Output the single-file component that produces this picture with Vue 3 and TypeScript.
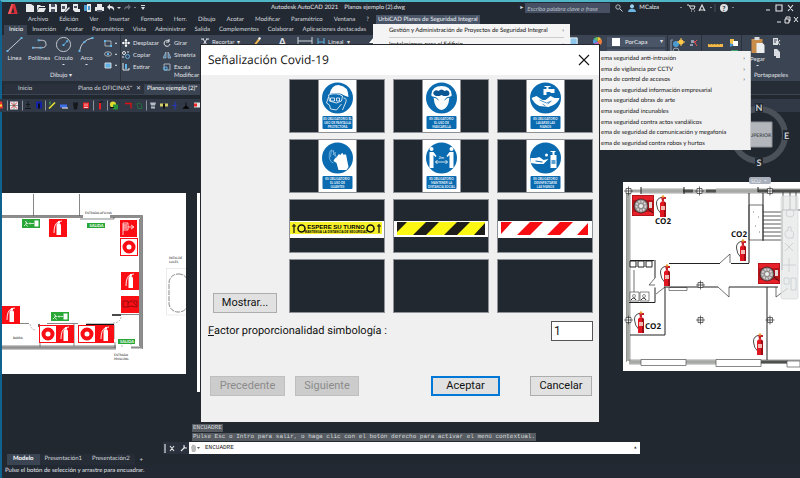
<script setup lang="ts">
import { ref } from 'vue'

interface Sign {
  id: string
  lines: string[]
}

const menus: string[] = ['Archivo', 'Edición', 'Ver', 'Insertar', 'Formato', 'Herr.', 'Dibujo', 'Acotar', 'Modificar', 'Paramétrico', 'Ventana', '?']
const ribbonTabs: string[] = ['Inicio', 'Inserción', 'Anotar', 'Paramétrico', 'Vista', 'Administrar', 'Salida', 'Complementos', 'Colaborar', 'Aplicaciones destacadas']
const submenu: { text: string; more: boolean }[] = [
  { text: 'ema seguridad anti-intrusión', more: true },
  { text: 'ema de vigilancia por CCTV', more: true },
  { text: 'ema de control de accesos', more: true },
  { text: 'ema de seguridad información empresarial', more: false },
  { text: 'ema seguridad obras de arte', more: false },
  { text: 'ema seguridad incunables', more: false },
  { text: 'ema seguridad contra actos vandálicos', more: false },
  { text: 'ema de seguridad de comunicación y megafonía', more: false },
  { text: 'ema de seguridad contra robos y hurtos', more: false },
]
const signs: Sign[] = [
  { id: 'visor', lines: ['ES OBLIGATORIO EL', 'USO DE PANTALLA', 'PROTECTORA'] },
  { id: 'mask', lines: ['ES OBLIGATORIO', 'EL USO DE', 'MASCARILLA'] },
  { id: 'wash', lines: ['ES OBLIGATORIO', 'LAVARSE LAS', 'MANOS'] },
  { id: 'glove', lines: ['ES OBLIGATORIO', 'EL USO DE', 'GUANTES'] },
  { id: 'distance', lines: ['ES OBLIGATORIO', 'MANTENER LA', 'DISTANCIA SOCIAL'] },
  { id: 'gel', lines: ['ES OBLIGATORIO', 'DESINFECTARSE', 'LAS MANOS'] },
]
const layouts: string[] = ['Modelo', 'Presentación1', 'Presentación2']
const factor = ref('1')
const query = ref('')
const color = ref('PorCapa')
const open = ref(true)

const extinguishers: [number, number][] = [[49, 220], [121, 273], [2, 307], [56, 326], [96, 326]]
const reels: [number, number][] = [[120, 239], [39, 326], [78, 326]]
const redExtinguishers: [number, number][] = [[656, 195], [736, 239], [660, 264], [634, 311], [753, 333]]
const cabinets: [number, number][] = [[632, 195], [758, 263]]
const crosses: [number, number][] = [[628.5, 191], [699.5, 191], [770, 191], [700.5, 285], [700.5, 320], [628.5, 320], [770, 320]]
</script>

<template>
  <div class="app">
    <header class="titlebar">
      <svg class="logo" viewBox="0 0 14 20"><path d="M0 17 5.500 2h3.500l4 15H9.500L8.700 13.500 4.500 13.800 3.500 17z" fill="#d62f36" /><path d="m5.300 11 1.800-5.500 1.200 5.200z" fill="#222933" /><path d="M0 17 5.500 2 7 2 3.500 17z" fill="#f05a5c" /></svg>
      <svg class="quick" viewBox="0 0 122 10">
        <g fill="#e8eaec">
          <path d="M1 1h5l3 2v6H1zM12 2h3l1 1h4v1h-6l-2 4zM14 5h7l-2 4h-7zM24 1h7l1 1v7h-8z" />
          <path d="M36 1h6v4l-3 4h-3zM44 4l1 1-4 4h-1V8zM48 1h5v5h2v3h-5l-2-2zM62 1h4v8h-4zM72 1h5v3h-5zM70 4h9v4H70z" />
          <path d="m82 4 3-3v2q5 0 4 5-1-3-4-3v2z" />
        </g>
        <path d="M26 1h4v3h-4zM26 6h4v3h-4zM37 3h3v3h-3zM49 3h3v2h-3zM72 7h5v2h-5z" fill="#4b5563" />
        <path d="M59 2h3v6h-3zM63 3h2v4h-2z" fill="#4a9bd2" />
        <path d="m106 4-3-3v2q-4 0-4 4 1-2 4-2v2z" fill="#616975" />
        <path d="m92 4 2 2 2-2zM109 4l1 1 1-1zM116 2h4v1h-4zM116 4h4l-2 3z" fill="#d8dbdf" />
      </svg>
      <h1 class="title"><span>Autodesk AutoCAD 2021</span><span>Planos ejemplo (2).dwg</span></h1>
      <div class="account">
        <i class="caret">▸</i>
        <input v-model="query" class="search" type="search" aria-label="Buscar" placeholder="Escriba palabra clave o frase" />
        <svg class="ic" viewBox="0 0 8 8"><circle cx="3" cy="3" r="2.200" fill="none" stroke="#d4d7db" stroke-width=".8" /><path d="m5 5 2.500 2.500" stroke="#d4d7db" /></svg>
        <svg class="ic" viewBox="0 0 8 8"><circle cx="4" cy="2.200" r="2" fill="#9bd1ef" /><path d="M0 8q0-3 4-3.500Q8 5 8 8z" fill="#6db5e2" /></svg>
        <span class="user">MCalza</span>
        <svg class="tray" viewBox="0 0 56 10"><path d="m1 4 1 1 1-1zM31 4l1 1 1-1zM53 4l1 1 1-1z" fill="#ddd" /><path d="M8 2h2l2 4h3l1-3h-5M12 8h1M15 8h1" fill="none" stroke="#ddd" /><path d="m20 8 3-6 3 6M21 7h4" fill="none" stroke="#ddd" stroke-width="1.200" /><path d="M36 1v8" stroke="#444c58" /><circle cx="45" cy="5" r="4" fill="#dfe1e4" /><text x="43.300" y="7.500" font-size="7" font-weight="bold" fill="#222933">?</text></svg>
        <svg class="winctl" viewBox="0 0 32 10"><path d="M1 7h4M11 2h6v6h-6zM23 2l5 6M28 2l-5 6" fill="none" stroke="#e8eaec" stroke-width="1.100" /></svg>
      </div>
    </header>

    <nav class="menubar">
      <a v-for="m in menus" :key="m" href="#">{{ m }}</a>
      <a href="#" class="current">UrbiCAD Planes de Seguridad Integral</a>
      <svg class="docctl" viewBox="0 0 24 10"><path d="M1 7h4M9 4h4v4H9zM10 4V2h4v4h-1M18 2l4 5M22 2l-4 5" fill="none" stroke="#e8eaec" /></svg>
      <div class="dropdown">
        <a href="#"><span>Gestión y Administración de Proyectos de Seguridad Integral</span><span>›</span></a>
        <a href="#"><span>Instalaciones para el Edificio</span><span>›</span></a>
      </div>
    </nav>

    <nav class="ribbontabs">
      <a v-for="(t, i) in ribbonTabs" :key="t" href="#" :class="{ active: i === 0 }">{{ t }}</a>
    </nav>

    <section class="ribbon">
      <div class="panel draw">
        <div class="tools">
          <button class="big"><svg viewBox="0 0 16 17"><path d="M1 15 15 2" stroke="#c9ced5" /><path d="M0 14h2v2H0zM14 1h2v2h-2z" fill="#5fb2e6" /></svg>Línea</button>
          <button class="big"><svg viewBox="0 0 18 17"><path d="M2 12h9q5 0 5-4t-4-4H8" fill="none" stroke="#c9ced5" /><path d="M1 11h2v2H1zM9 11h2v2H9zM7 3h2v2H7z" fill="#5fb2e6" /></svg>Polilínea</button>
          <button class="big"><svg viewBox="0 0 18 17"><circle cx="9" cy="8.500" r="7.500" fill="none" stroke="#c9ced5" /><path d="m9 9 4-4" stroke="#5fb2e6" /><path d="M8 8h2v2H8zM12 4h2v2h-2z" fill="#5fb2e6" /></svg>Círculo<b class="drop"></b></button>
          <button class="big"><svg viewBox="0 0 16 17"><path d="M1 15Q3 4 14 2" fill="none" stroke="#c9ced5" /><path d="M0 14h2v2H0zM5 5h2v2H5zM13 1h2v2h-2z" fill="#5fb2e6" /></svg>Arco<b class="drop"></b></button>
          <svg class="shapes" viewBox="0 0 14 34"><path d="M1 5h6v5H1z" fill="none" stroke="#aab1bb" /><ellipse cx="4" cy="18" rx="3.500" ry="2.200" fill="none" stroke="#aab1bb" /><path d="M1 27h6v5H1z" fill="#5fb2e6" stroke="#cfd4da" /><path d="m11 7 1 1 1-1zM11 18l1 1 1-1zM11 29l1 1 1-1z" fill="#ddd" stroke="#ddd" stroke-width=".5" /><path d="M0 4h2v2H0zM6 9h2v2H6zM3 17h2v2H3z" fill="#5fb2e6" /></svg>
        </div>
        <span class="caption">Dibujo <i>▾</i></span>
      </div>

      <div class="panel modify">
        <div class="toolgrid">
          <button><svg viewBox="0 0 8 8"><path d="M4 0v8M0 4h8" stroke="#fff" stroke-width="1.200" /><path d="m4 0 1.500 2h-3zM4 8l1.500-2h-3zM0 4l2-1.500v3zM8 4 6 2.500v3z" fill="#fff" /></svg>Desplazar</button>
          <button><svg viewBox="0 0 8 8"><path d="M6 2a3 3 0 1 0 1 3M6 0v3H3" fill="none" stroke="#e6e8eb" /></svg>Girar</button>
          <button><svg viewBox="0 0 8 8"><circle cx="2" cy="2" r="1.500" fill="none" stroke="#e6e8eb" /><circle cx="5.500" cy="5.500" r="2" fill="none" stroke="#5fb2e6" /><path d="M5 1h2M1 5v2" stroke="#e6e8eb" /></svg>Copiar</button>
          <button><svg viewBox="0 0 8 8"><path d="M0 7 3 1v6zM8 7 5 1v6z" fill="#3d7fae" stroke="#c9ced5" stroke-width=".6" /></svg>Simetría</button>
          <button><svg viewBox="0 0 8 8"><path d="M1 0v7h6V5" fill="none" stroke="#e6e8eb" /><path d="M3 1h2v5H3z" fill="#5fb2e6" /></svg>Estirar</button>
          <button><svg viewBox="0 0 8 8"><path d="M1 1h6v6H1z" fill="none" stroke="#aab1bb" /><path d="M1 4h3v3H1z" fill="none" stroke="#5fb2e6" /></svg>Escala</button>
        </div>
        <span class="caption">Modificar <i>▾</i></span>
      </div>

      <div class="panel annotate">
        <button class="tool"><svg viewBox="0 0 8 8"><path d="M0 1h3M2 1l4 6M6 1 2 7M5 1h3" stroke="#e6e8eb" /></svg>Recortar <i>▾</i></button>
        <svg class="brush" viewBox="0 0 10 10"><path d="m2 9 5-7 2 1-5 6z" fill="#f2b84b" /><path d="m7 2 1-2 2 1-1 2z" fill="#fff" /></svg>
        <b class="glyph">A</b>
        <svg class="dim" viewBox="0 0 16 8"><path d="M1 0v8M15 0v8M1 4h14" stroke="#cfd4da" fill="none" /></svg>
        <button class="tool lineal"><svg viewBox="0 0 8 8"><path d="M1 0v8M7 0v8M1 4h6" stroke="#5fb2e6" /></svg>Lineal <i>▾</i></button>
        <svg class="layers" viewBox="0 0 14 10"><path d="M5 0h9L9 6H0z" fill="#fff" /><path d="M2 7h7l3-4 2 0-4 6H0z" fill="#c3c8ce" /></svg>
      </div>

      <div class="panel props">
        <svg class="preview" viewBox="0 0 10 10"><path d="M0 1h8v9H0z" fill="#8fc6ea" stroke="#fff" /></svg>
        <svg class="wheel" viewBox="0 0 10 10"><path d="M5 5V0A5 5 0 0 1 9.300 2.500z" fill="#f4c534" /><path d="M5 5 9.300 2.500A5 5 0 0 1 7.500 9.300z" fill="#ef7c3b" /><path d="M5 5 7.500 9.300A5 5 0 0 1 .7 7.500z" fill="#c35fc9" /><path d="M5 5 .7 7.500A5 5 0 0 1 1 2z" fill="#4d9de0" /><path d="M5 5 1 2A5 5 0 0 1 5 0z" fill="#5dc46a" /></svg>
        <div class="combos">
          <label class="combo"><span class="swatch"></span><select v-model="color" aria-label="Color"><option>PorCapa</option></select><i>▾</i></label>
          <div class="combo"></div>
        </div>
      </div>

      <div class="panel groups">
        <svg viewBox="0 0 32 20"><path d="M4 2H2v16h2M14 18h2" fill="none" stroke="#8fa0b4" /><circle cx="7" cy="6" r="3" fill="#4a9bd2" /><circle cx="7" cy="13" r="3" fill="none" stroke="#9aa3af" /><circle cx="12" cy="4" r="2.500" fill="#ffc94a" /><path d="M12 0v8M8 4h8" stroke="#ffc94a" /><path d="M22 2h3v3h-3zM21 6h3v2h-3z" fill="#8fa0b4" /><path d="m25 5 3-3M25 3l3 5" stroke="#e84b4b" /></svg>
      </div>
      <div class="panel utils">
        <svg viewBox="0 0 32 20"><path d="M2 6h15v3H2z" fill="#f0b84a" /><path d="M4 6v1M7 6v1M10 6v1M13 6v1" stroke="#8b6410" /><path d="M24 1h4v5h-4z" fill="#f2c24e" /><path d="M27 3h5v5h-5z" fill="#fff" /><path d="m24 5 4 2-4 2z" fill="#4a9bd2" /><path d="M25 12h7v7h-7z" fill="#3da36a" /></svg>
      </div>
      <div class="panel clip">
        <div class="cliprow">
          <button class="big"><svg viewBox="0 0 16 17"><path d="M2 2h11v14H2z" fill="#c98d4b" /><path d="M5 0h5v3H5z" fill="#d9dce0" /><path d="M7 6h6l2 2v8H7z" fill="#eceef0" /></svg>Pegar<b class="drop"></b></button>
          <svg class="clipicons" viewBox="0 0 8 22"><path d="M0 1h5v7H0zM1 12h3l3 3v6H3v-2H1z" fill="#d9dce0" /><path d="m3 3 4 5M7 3 3 8" stroke="#e6e8eb" /><path d="M1 3h3M1 5h2" stroke="#3b4453" /></svg>
        </div>
        <span class="caption">Portapapeles</span>
      </div>
    </section>

    <nav class="filetabs">
      <a href="#">Inicio</a>
      <a href="#">Plano de OFICINAS* <i>✕</i></a>
      <a href="#" class="active">Planos ejemplo (2)*</a>
    </nav>

    <div class="toolstrip">
      <svg viewBox="0 0 202 12">
        <path d="M0 2h2l1 7H0z" fill="#e33" /><path d="M0 5h2v2H0z" fill="#fd3" />
        <path d="M7.500 1v10M22.500 1v10M45.500 1v10M93.500 1v10M107.500 1v10M146.500 1v10" stroke="#8b929c" />
        <path d="M10 2h8v8h-8z" fill="#eee" /><path d="m11 3 6 6M17 3l-6 6" stroke="#d33" /><path d="M14 2v8M10 6h8" stroke="#555" stroke-width=".6" />
        <path d="M28 2v6M26 5h4M25 9h6" stroke="#15181d" /><path d="M36 2h6v7h-6z" fill="#1424a5" /><path d="M38 4h2v5h-2z" fill="#0a0e20" />
        <path d="m49 9 6-6" stroke="#e6e234" stroke-width="1.600" /><path d="M50 2v3" stroke="#38c14a" /><path d="M60 5h7v3h-7z" fill="#3d6fe8" /><path d="M62 8h6v1h-6z" fill="#fff" />
        <path d="M73 3h5l-1 7h-3z" fill="#14171c" /><path d="M83 3h6v6h-6z" fill="#eb1d22" /><path d="M85 4v3M87 4v3M84 8h4" stroke="#fff" stroke-width=".7" />
        <path d="M100 3v7" stroke="#eb1d22" stroke-width="2" /><path d="m99 3 4-1" stroke="#111" /><circle cx="113" cy="5" r="3" fill="#e4dc2c" /><path d="M113 5h5v5h-5z" fill="#27923b" /><path d="M110 8h4" stroke="#111" />
        <path d="M125 4h6v5" fill="none" stroke="#d11" stroke-width="1.300" /><path d="M137 4q5-2 5 5h-4z" fill="none" stroke="#236c3c" />
        <path d="M150 3h6l-1 3h-4zM151 7h4v2h-4z" fill="#b8bec6" /><path d="M160 4h8v3h-8z" fill="#d4cf6b" /><path d="M163 4h2v5h-2z" fill="#111" />
        <path d="M175 2v8M172 6h5" stroke="#2839b5" stroke-width="1.200" /><path d="M186 3v4M183 9l3-3 3 3z" stroke="#111" /><path d="M194 3h7v5h-7z" fill="#e0e0e0" /><path d="M194 4h3v3h-3z" fill="#e22" />
      </svg>
    </div>

    <main class="canvas">
      <svg class="plan left" viewBox="2 193 184 181">
        <path d="M2 193h184v181H2z" fill="#fff" />
        <path d="M2 217h82" stroke="none" />
        <path d="M2 229.500h82M112 229.500h31v119M2 347.500h114M131 347.500h11" fill="none" stroke="#8d8d8d" stroke-width="2" transform="translate(0 -13) scale(1)" visibility="hidden" />
        <path d="M2 217h81M110 217h31v131M2 347.500h114M131 347.500h11" fill="none" stroke="#8d8d8d" stroke-width="2" />
        <path d="M2 215.500h81M110 215.500h32.500V349M2 346h114M2 349h114M139.500 219v127M33.500 194v22M79.500 194v22M80 219h34v-2M139 314.500h-18M115 342v6M40 325v22M74 324v22M2 323.500h27M47 323.500h31M114 325v14" fill="none" stroke="#555" stroke-width=".7" />
        <path d="M112 315h9M86 324.500h28M39 324v3" stroke="#111" stroke-width="1.300" />
        <path d="M30 324q1 6 6 6M121 317q-1 6-8 6M122 342v6M131 340v6" fill="none" stroke="#777" stroke-width=".5" stroke-dasharray="2 1" />
        <rect x="169" y="274" width="19" height="38" rx="9" fill="none" stroke="#555" stroke-width=".7" stroke-dasharray="5 1" />
        <path d="M166 268.500h20M166.500 268v47h20" fill="none" stroke="#d8d8d8" stroke-width=".5" />
        <g class="label"><text x="85" y="214">ENTRADA OFICINA</text><text x="169" y="259">PATIO DE</text><text x="169" y="263">LUCES</text><text x="13" y="339">BARRA</text><text x="114" y="356">ENTRADA</text><text x="114" y="360">PRINCIPAL</text></g>
        <g v-for="[x, y] in [[22, 219], [51, 312]]" :key="'r' + x" :transform="`translate(${x} ${y})`">
          <rect width="18" height="9" fill="#28a636" /><path d="M12.500 1.500h4v6h-4z" fill="#fff" /><path d="M7 4.500h5M8 3.500 7 4.500 8 5.500" fill="none" stroke="#fff" stroke-width=".7" /><path d="m3.500 2 1 2-1 1.500L2 7M4 4l2 .5M4 5.500l1.500 2" fill="none" stroke="#fff" stroke-width=".8" />
        </g>
        <g class="exit"><path d="M87 223h18v5H87zM118 339h17v5h-17z" fill="#28a636" /><text x="89.500" y="227">SALIDA</text><text x="120" y="343">SALIDA</text></g>
        <g v-for="([x, y], i) in extinguishers" :key="'e' + i" :transform="`translate(${x} ${y - 1})`">
          <rect width="18" height="18" fill="#fb0d14" /><path d="M7.500 6q0-2 2-2t2.500 2v10H7.500zM9 2h2v2H9z" fill="#fff" /><path d="M9 3Q5 5 5 14M10 2.500l3-.5" fill="none" stroke="#fff" stroke-width=".9" />
        </g>
        <g v-for="([x, y], i) in reels" :key="'b' + i" :transform="`translate(${x} ${y - 1})`">
          <rect x=".5" y=".5" width="17" height="17" fill="#fff" stroke="#fb0d14" /><circle cx="9" cy="9" r="4.500" fill="none" stroke="#fb0d14" stroke-width="4" />
        </g>
        <path d="M120 220h17v17h-17zM121 296h18v17h-18z" fill="#fb0d14" /><path d="M123 223h5v7h-5zM123 230v5M128 227h5M131 225l3 2-3 2" fill="none" stroke="#fff" stroke-width=".8" /><path d="M124 224v5M126 224v5" stroke="#fff" /><path d="M123 301h5v6h-5zM128 303l3-2h6v6l-6-1-3 1M133 302l3 3" fill="none" stroke="#6d0b10" stroke-width=".7" />
      </svg>
      <div class="sheet"></div>

      <svg class="plan right" viewBox="623 182 177 189">
        <path d="M623 182h177v189H623z" fill="#fff" />
        <path d="M628 193v168M629 191h171M629 362h171" fill="none" stroke="#a6aaa4" stroke-width="3" />
        <path d="M626.500 189v173M630 193v168M641 189h43M716 189h84M641 193h159M629 360h171M629 364h35M684 364h76" fill="none" stroke="#666" stroke-width=".6" />
        <path d="M683 191h10M706 191h10M758 191h42M761 362h27" stroke="#4e524e" stroke-width="3" />
        <path d="M641 359.500h45v6h-45zM716 359.500h45v7h-45zM787 361h13v6h-13zM669 287.500h18v3h-18z" fill="#fff" stroke="#555" stroke-width=".7" />
        <path d="M749 193v70M763 193v48M782 210v60M630 260.500h24M669 263.500h51M731 263.500h18M664 287h54M729 287h49M665 287v48M630 335h35M629 302.500h26v-15M655 260v18M767 287v73M641 187v7M684 187v7M758 187v5" fill="none" stroke="#222" stroke-width="1" />
        <path d="m720 263 10-9v9M718 287l11 10v-10M776 287v10l12-9M655 278l-6 7h6M656 294l9-7M634 270v30" fill="none" stroke="#333" stroke-width=".7" />
        <path d="M749 205h14v35h-14z" fill="none" stroke="#333" stroke-width=".7" /><path d="M753 212h1M758 217h1M755 226h1M759 232h1" stroke="#777" />
        <path d="M763 212h19M763 216h19M763 220h19M763 224h19M763 228h19M763 232h19M763 236h19M763 240h19M783 192v18M790 192v18M796 192v18M782 210h18" stroke="#333" stroke-width=".8" />
        <path d="M630 261h6v6h-6zM638 261h6v6h-6zM646 261h6v6h-6z" fill="#fff" stroke="#222" /><path d="M630 292h9v9h-9zM640 292h9v9h-9z" fill="#fff" stroke="#333" stroke-width=".6" /><path d="M631 300q3-4 5 0M641 300q3-4 5 0" fill="none" stroke="#222" /><circle cx="634" cy="296" r="1.500" fill="none" stroke="#222" stroke-width=".5" /><circle cx="644" cy="296" r="1.500" fill="none" stroke="#222" stroke-width=".5" />
        <g v-for="([x, y], i) in crosses" :key="'c' + i" :transform="`translate(${x} ${y})`"><path d="M-2.500-2.500h5v5h-5z" fill="#eee" /><path d="M-4.500 0h9M0-4.500v9M-2.500-2.500h5v5h-5z" fill="none" stroke="#333" stroke-width=".7" /></g>
        <g v-for="([x, y], i) in cabinets" :key="'g' + i" :transform="`translate(${x} ${y})`">
          <path d="M0 0h22v21H0z" fill="#b5141b" /><path d="M1 1h20v4H1zM1 17h20v3H1z" fill="#e6212a" /><circle cx="9" cy="11" r="7" fill="#8f8b8c" stroke="#330f12" stroke-width=".7" /><circle cx="9" cy="11" r="4.500" fill="none" stroke="#d4d0ce" stroke-width="2" stroke-dasharray="2 1" /><circle cx="9" cy="11" r="2" fill="#eee" /><path d="M17 7h3v6h-3z" fill="#e7d9d8" /><path d="M16 14l5 4" stroke="#440a0d" />
        </g>
        <g v-for="([x, y], i) in redExtinguishers" :key="'x' + i" :transform="`translate(${x} ${y})`">
          <path d="M7 2Q0 3 .5 9t4 9" fill="none" stroke="#1c1c1c" stroke-width=".8" /><path d="M4 8q3-4 6 0v14H4z" fill="#e01620" /><path d="M8 7q1 0 2 1v14H8z" fill="#9d0c14" /><path d="M5 11h4v4H5z" fill="#f2b9b4" /><path d="M5 2h5v2H8v2H6z" fill="#c6212a" /><circle cx="7" cy="1.500" r="1.200" fill="#e7a32d" />
        </g>
        <g class="co2"><text x="655" y="223.500">CO2</text><text x="731" y="236.500">CO2</text><text x="645" y="328.500">CO2</text></g>
        <rect x="781" y="196" width="17" height="103" rx="2" fill="#e6e8e8" fill-opacity=".75" stroke="#cfd1d3" stroke-width=".6" />
        <g fill="none" stroke="#c9cccf" stroke-width=".8"><circle cx="790" cy="213" r="4" /><path d="M785 235q0-6 3-4v-4h3v4q4 0 2 7h-6zM785 251l8-8M785 243l8 8M789 258v14M783 265h13M784 278h5v6h-5zM791 278h5v12h-5z" /></g>
      </svg>

      <svg class="viewcube" viewBox="730 100 66 86">
        <circle cx="759" cy="135" r="26" fill="none" stroke="#4b5158" stroke-width="6" />
        <path d="M746 122h26v25h-26z" fill="#b3b7bb" stroke="#8c9197" /><path d="M755 103h8v9h-8zM783 130h7v10h-7zM755 158h8v9h-8z" fill="#212830" /><g class="compass"><text x="759" y="111">N</text><text x="786.500" y="138.500">E</text><text x="759" y="166">S</text></g><text class="face" x="759" y="137">SUPERIOR</text>
        <rect x="749" y="177" width="22" height="7" rx="2" fill="#a9b0bb" /><text class="scu" x="751" y="182.500">SCU</text><path d="m764 180 1.500 1.500L767 180z" fill="#dfe3e8" />
      </svg>

      <div class="submenu">
        <a v-for="item in submenu" :key="item.text" href="#"><span>{{ item.text }}</span><span v-if="item.more">›</span></a>
      </div>

      <section class="command">
        <p><span>ENCUADRE</span></p>
        <p><span>Pulse Esc o Intro para salir, o haga clic con el botón derecho para activar el menú contextual.</span></p>
        <div class="prompt">
          <svg viewBox="0 0 26 12"><path d="M1 2h2v9H1z" fill="#9299a2" /><path d="m7 4 4 5M11 4 7 9M18 9l4-4M21 3v3h3" stroke="#e8eaec" fill="none" stroke-width="1.100" /></svg>
          <div class="line"><svg viewBox="0 0 12 10"><path d="M2 4q0-2 1 0V2q1-1 1 0 1-1 1 0 1-1 1 1 1-1 1 1v3L6 9H3z" fill="#bbb" /><path d="m8 4 1.500 2L11 4z" fill="#555" /></svg><span>ENCUADRE</span><i>▴</i></div>
        </div>
      </section>
    </main>

    <nav class="layouts">
      <a v-for="(l, i) in layouts" :key="l" href="#" :class="{ active: i === 0 }">{{ l }}</a>
      <button aria-label="Nueva presentación">+</button>
    </nav>
    <footer class="status">Pulse el botón de selección y arrastre para encuadrar.</footer>

    <div v-if="open" class="overlay">
      <section class="dialog" role="dialog" aria-labelledby="dialog-title">
        <header>
          <h2 id="dialog-title">Señalización Covid-19</h2>
          <button class="close" aria-label="Cerrar" @click="open = false"><svg viewBox="0 0 12 12"><path d="m1 1 10 10M11 1 1 11" stroke="#111" stroke-width="1.100" /></svg></button>
        </header>
        <div class="gallery">
          <button class="btn show">Mostrar...</button>
          <div class="cells">
            <button v-for="s in signs" :key="s.id" class="cell" :aria-label="s.lines.join(' ')">
              <svg class="sign" viewBox="0 0 38 52">
                <path d="M0 0h38v52H0z" fill="#fff" /><circle cx="19" cy="18" r="15.500" fill="#0b6bb0" /><rect x="4" y="36" width="30" height="13" rx="1" fill="#0b6bb0" />
                <g v-if="s.id === 'visor'"><path d="M11 14Q13 5 20 5q10 1 10 12l-3-1q-7-5-16-2z" fill="#fff" /><path d="M10 15q8-3 14 1l-1 5-5 2-7-2zM10 17l-2 6 3 2 1 4 6 1 5-6M25 18q4 0 2 5l-3 7M12 18h4v3h-4zM18 18h3v3h-3z" fill="none" stroke="#fff" stroke-width=".8" /></g>
                <g v-else-if="s.id === 'mask'"><path d="M9 14Q10 6 19 6t10 8q1 2-2 3l-1 6q-2 6-7 7-5-1-7-7l-1-6q-3-1-2-3z" fill="#fff" /><path d="M11 12q2-3 5-1 3-3 6 0 4-2 5 2 0 3-3 3h-3l-2-1-2 1h-3q-4-1-3-4z" fill="#0b5796" /><path d="M10 17q4 0 6 3M28 17q-4 0-6 3" fill="none" stroke="#0b6bb0" /></g>
                <g v-else-if="s.id === 'wash'"><path d="M17 9h3V7h-2V6h6v1h-2v2h6v4h-4v-1h-4v3h-3z" fill="#fff" /><path d="M5 18l5-2 6 4h3l5-4 4 2h5q-1 4-6 7l-5 2-9-1q-6-3-8-8z" fill="#fff" /><path d="M13 20l7 3 5-2M16 24l3 2M24 22l-3 2" fill="none" stroke="#0b6bb0" stroke-width=".7" /></g>
                <g v-else-if="s.id === 'glove'"><path d="M19 16q1-3 3-1 2-4 3 0 3-2 3 2l2 10-2 3h-8l-2-7-3-2 1-2z" fill="#fff" /><path d="M18 18q-2-7-5-8-3 1-2 9 2 4 4 4M13 10l-1 7M15 10v5M17 12l-1 4" fill="none" stroke="#8fc4e8" stroke-width=".7" /></g>
                <g v-else-if="s.id === 'distance'"><circle cx="9" cy="9" r="2" fill="#fff" /><circle cx="29" cy="9" r="2" fill="#fff" /><path d="M7 12h4l3 4-1 1-2-2v13H7zM27 12h4v16h-4V15l-2 2-1-1z" fill="#fff" /><path d="M13 22h12M15 20l-2 2 2 2M23 20l2 2-2 2" fill="none" stroke="#fff" stroke-width=".8" /><text x="16" y="19">2m</text></g>
                <g v-else><path d="M4 18h5l4-1 4 3 5-1-5 5h-6l-7-1z" fill="#fff" /><path d="M24 15h6v13h-6zM26 12h2v3h-2zM24 11h5v1h-5z" fill="#fff" /><path d="M25 20h4v4h-4z" fill="#5da1d2" /><circle cx="20" cy="15" r="1.500" fill="#fff" /><path d="M9 21l7 1" stroke="#0b6bb0" /></g>
                <text v-for="(l, i) in s.lines" :key="l" class="signtext" x="19" :y="40 + i * 4">{{ l }}</text>
              </svg>
            </button>
            <button class="cell tape" aria-label="Espere su turno"><svg viewBox="0 0 94 17"><path d="M0 0h94v17H0z" fill="#fff" /><path d="M0 1h92v12H0z" fill="#f6f02b" /><path d="M4 3v9M2 5h4M89 3v9M87 5h4" stroke="#111" stroke-width="1.200" /><circle cx="11.500" cy="7.500" r="3.500" fill="none" stroke="#111" stroke-width="1.500" /><circle cx="80.500" cy="7.500" r="3.500" fill="none" stroke="#111" stroke-width="1.500" /><text class="turn" x="46" y="8">ESPERE SU TURNO</text><text class="turnsmall" x="46" y="12">MANTENGA LA DISTANCIA DE SEGURIDAD</text></svg></button>
            <button class="cell tape" aria-label="Cinta amarilla y negra"><svg viewBox="0 0 94 17"><path d="M0 0h94v16H0z" fill="#fff" /><path d="M3 1h88v13H3z" fill="#fbf712" /><path d="M3 1h10L3 11zM32 1h13L32 14H19zM63 1h13L63 14H50zM91 2v12H80z" fill="#1d1d1b" /></svg></button>
            <button class="cell tape" aria-label="Cinta roja y blanca"><svg viewBox="0 0 94 17"><path d="M0 0h94v17H0z" fill="#fff" /><path d="M3 1h11L3 13zM32 1h13L32 14H19zM62 1h13L62 14H49zM90 2v12H79z" fill="#f80d12" /></svg></button>
            <button v-for="n in 3" :key="n" class="cell" aria-label="Vacío"></button>
          </div>
        </div>
        <div class="factor">
          <label for="factor"><u>F</u>actor proporcionalidad simbología :</label>
          <input id="factor" v-model="factor" type="text" />
        </div>
        <footer class="actions">
          <button class="btn prev" disabled>Precedente</button>
          <button class="btn next" disabled>Siguiente</button>
          <button class="btn ok" @click="open = false">Aceptar</button>
          <button class="btn cancel" @click="open = false">Cancelar</button>
        </footer>
      </section>
    </div>
  </div>
</template>

<style>
body { background: #212830; overflow: hidden; }
</style>

<style scoped>
* { box-sizing: border-box; }
.app { position: relative; display: flex; flex-direction: column; min-height: 100vh; background: #212830; border-top: 2px solid #4fb6c8; border-left: 2px solid #10628f; font: 6px/8px Lato, "Open Sans", sans-serif; text-rendering: geometricPrecision; color: #d3d7dc; }
a { color: inherit; text-decoration: none; white-space: nowrap; }
button { font: inherit; color: inherit; background: none; border: 0; padding: 0; white-space: nowrap; }
i { font-style: normal; }
svg { display: block; flex: none; }
h1, h2, p { margin: 0; font: inherit; }

.titlebar { display: flex; height: 12px; align-items: center; background: #222933; }
.logo { width: 14px; height: 20px; margin-left: 4px; align-self: flex-start; }
.quick { width: 122px; height: 10px; margin-left: 5px; }
.title { display: flex; gap: 6px; margin-left: 124px; color: #e3e5e8; white-space: nowrap; }
.account { display: flex; align-items: center; gap: 5px; margin-left: auto; padding-right: 3px; }
.caret { color: #ddd; }
.search { width: 85px; height: 10px; padding: 0 2px; border: 0; background: #465062; color: #dde; font: inherit; font-style: italic; margin-left: -3px; }
.search::placeholder { color: #b6bdc8; }
.ic { width: 8px; height: 8px; }
.user { margin-left: -2px; color: #eee; }
.tray { width: 56px; height: 10px; margin-left: 15px; }
.winctl { width: 32px; height: 10px; margin-left: 25px; }

.menubar { position: relative; z-index: 5; display: flex; align-items: center; height: 11px; gap: 11px; padding-left: 26px; background: #222933; }
.menubar .current { margin-left: -4px; padding: 0 2px; line-height: 9px; background: #4a5568; color: #f0f1f3; }
.docctl { width: 24px; height: 10px; margin-left: auto; }
.dropdown { position: absolute; left: 371px; top: 10px; width: 197px; padding: 0 6px 0 16px; background: #f4f4f4; color: #111; }
.dropdown a { display: flex; justify-content: space-between; line-height: 13px; }
.dropdown a + a { border-top: 1px solid #ccc; }

.ribbontabs { display: flex; height: 10px; padding-left: 2px; background: #222933; line-height: 10px; }
.ribbontabs a { padding: 0 4px 0 5px; }
.ribbontabs a.active { background: #3b4453; color: #fff; }

.ribbon { display: flex; height: 46px; background: #3b4453; color: #e0e3e7; overflow: hidden; }
.panel { display: flex; flex-direction: column; flex: none; border-right: 1px solid #2b323d; }
.caption { margin-top: auto; text-align: center; line-height: 10px; }
.draw { width: 119px; }
.tools { display: flex; gap: 4px; padding: 1px 2px 0 3px; }
.big { display: flex; flex-direction: column; align-items: center; min-width: 19px; }
.big svg { width: 17px; height: 17px; margin-bottom: 1px; }
.drop { margin-top: 2px; border: 1px solid transparent; border-top-color: #dfe2e6; border-bottom: 0; width: 3px; }
.shapes { width: 14px; height: 34px; margin-left: auto; }
.modify { width: 80px; border: 0; }
.modify .caption { padding-left: 53px; text-align: left; white-space: nowrap; }
.toolgrid { display: grid; grid-template-columns: 41px 1fr; gap: 3px 0; padding: 3px 0 0 1px; }
.toolgrid button, .tool { display: flex; align-items: center; gap: 3px; line-height: 9px; }
.toolgrid svg, .tool svg { width: 8px; height: 8px; }
.annotate { flex: 1; flex-direction: row; align-items: flex-start; gap: 11px; padding-top: 2px; border: 0; }
.brush { width: 10px; height: 10px; }
.glyph { font-size: 11px; line-height: 12px; margin-left: 6px; }
.dim { width: 16px; height: 8px; }
.lineal { margin-left: -7px; }
.layers { width: 14px; height: 10px; margin-left: 8px; }
.props { width: 98px; flex-direction: row; gap: 5px; padding-top: 2px; }
.preview, .wheel { width: 9px; height: 9px; }
.wheel { margin-left: 9px; }
.combos { display: grid; flex: 1; gap: 2px; align-content: start; padding-right: 2px; }
.combo { display: flex; align-items: center; height: 10px; padding: 0 2px 0 5px; background: #4a5568; }
.combo select { flex: 1; min-width: 0; appearance: none; border: 0; padding: 0 0 0 5px; background: none; font: inherit; color: #eee; }
.swatch { width: 8px; height: 8px; background: #fff; }
.groups { width: 34px; }
.utils { width: 40px; }
.groups svg, .utils svg { width: 32px; height: 20px; margin: 3px 0 0 1px; }
.utils svg { margin-left: 4px; }
.clip { width: 58px; border: 0; }
.cliprow { display: flex; gap: 6px; padding: 2px 0 0 6px; }
.clipicons { width: 8px; height: 22px; }

.filetabs { display: flex; height: 14px; padding: 3px 0 0 2px; border-bottom: 1px solid #3b4453; line-height: 10px; background: #262d37; }
.filetabs a { width: 70px; padding-left: 14px; background: #2b323d; }
.filetabs a:nth-child(2) { padding-left: 4px; }
.filetabs a.active { width: 62px; padding-left: 3px; background: #3b4453; color: #fff; }
.filetabs i { margin-left: 2px; }
.toolstrip { margin: 4px 0 0 -2px; background: #313946; }
.toolstrip svg { width: 202px; height: 13px; }

.canvas { position: relative; flex: 1; min-height: 342px; }
.plan, .viewcube, .sheet, .submenu, .command { position: absolute; }
.left { left: 0; top: 81px; width: 184px; height: 181px; }
.sheet { left: 195px; top: 81px; width: 5px; height: 199px; background: #fff; }
.right { right: 0; top: 70px; width: 177px; height: 189px; }
.viewcube { right: 4px; top: -12px; width: 66px; height: 86px; }
.label { font-size: 3px; fill: #111; }
.exit { font-size: 4px; font-weight: bold; fill: #fff; }
.co2 { font: bold 8px "Open Sans", sans-serif; fill: #111; }
.compass { font-size: 9px; font-weight: bold; fill: #c9ccd0; text-anchor: middle; }
.face { font-size: 5px; font-weight: bold; fill: #4a4f56; text-anchor: middle; }
.scu { font-size: 5px; fill: #eef0f3; }
.submenu { right: 49px; top: -61px; width: 152px; height: 99px; display: grid; grid-auto-rows: 1fr; padding: 3px 5px 1px 2px; background: #f1f1f1; color: #111; border-right: 1px solid #ccc; }
.submenu a { display: flex; justify-content: space-between; align-items: center; }
.command { left: 161px; right: 160px; bottom: 0; font: 6px/8px "Liberation Mono", monospace; color: #d5d8db; }
.command p { padding-left: 29px; margin-bottom: 1px; white-space: nowrap; }
.command p span { display: inline-block; padding: 0 1px; background: #565c62; }
.prompt { display: flex; height: 12px; background: #2b323d; }
.prompt > svg { width: 26px; height: 12px; }
.line { display: flex; flex: 1; align-items: center; gap: 4px; padding-right: 3px; background: #fff; color: #222; }
.line svg { width: 12px; height: 10px; }
.line i { margin-left: auto; }

.layouts { display: flex; height: 11px; padding-left: 5px; line-height: 10px; }
.layouts a { padding: 0 5px; background: #262d37; }
.layouts a.active { padding: 0 6px; background: #3b4453; color: #fff; font-weight: bold; }
.layouts button { padding: 0 5px; }
.status { height: 13px; padding-left: 3px; line-height: 12px; color: #e4e6e9; background: #222933; }

.overlay { position: absolute; z-index: 10; inset: 42px 0 auto -2px; display: flex; justify-content: center; }
.dialog { width: 400px; border: 1px solid #24272b; background: #f0f0f0; color: #111; font: 11px/16px Roboto, "Liberation Sans", sans-serif; }
.dialog header { display: flex; justify-content: space-between; align-items: center; height: 30px; padding: 0 9px 0 7px; background: #fff; }
.dialog h2 { font: 12px/16px "Open Sans", "Noto Sans", sans-serif; }
.close svg { width: 12px; height: 12px; }
.gallery { display: flex; justify-content: space-between; align-items: flex-end; padding: 4px 6px 0 12px; }
.btn { height: 20px; border: 1px solid #adadad; background: #e1e1e1; line-height: 16px; }
.btn:disabled { background: #ccc; border-color: #bfbfbf; color: #8b8b8b; }
.show { width: 64px; }
.cells { display: grid; grid-template-columns: repeat(3, 96px); gap: 6px 8px; }
.cell { display: flex; justify-content: center; align-items: center; height: 54px; border: 1px solid #8e9195; background: #212830; overflow: hidden; }
.sign { width: 39px; height: 52px; }
.sign text { font: 4px Lato, sans-serif; fill: #fff; }
.sign .signtext { font: bold 3px Lato, sans-serif; text-anchor: middle; fill: #e3effa; }
.tape { padding-top: 6px; }
.tape svg { width: 94px; height: 17px; }
.turn { font: bold 6px "Liberation Sans", sans-serif; text-anchor: middle; }
.turnsmall { font: bold 3px "Liberation Sans", sans-serif; text-anchor: middle; }
.factor { display: flex; justify-content: space-between; align-items: center; padding: 8px 6px 0 7px; }
.factor input { width: 42px; height: 20px; padding: 0 2px; border: 1px solid #555; background: #fff; font: inherit; font-size: 12px; color: #111; }
.actions { display: flex; gap: 10px; padding: 35px 7px 26px 9px; }
.prev { width: 75px; }
.next { width: 64px; }
.ok { width: 69px; margin-left: auto; border: 2px solid #0078d7; }
.cancel { width: 62px; margin-left: 20px; }
</style>
